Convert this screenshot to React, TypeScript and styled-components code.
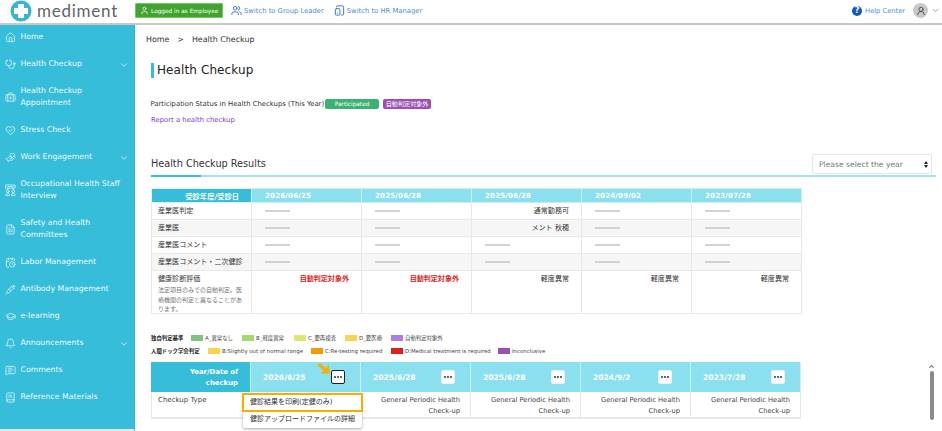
import React from 'react';
import styled, { createGlobalStyle } from 'styled-components';
import { Home, Stethoscope, BriefcaseMedical, HandHeart, FileText, CalendarClock, Syringe, GraduationCap, Bell, MessageSquareText, BookText, ChevronDown, User, UserRound, Users, TabletSmartphone, ChevronUp } from 'lucide-react';

const FONT = '"DejaVu Sans", "Noto Sans CJK JP", sans-serif';

const Global = createGlobalStyle`
  html, body { margin: 0; padding: 0; height: 431px; overflow: hidden; background: #fff; }
  #root { height: 431px; }
  * { box-sizing: border-box; }
  body { font-family: ${FONT}; }
`;

const Page = styled.div`
  width: 942px; height: 431px; display: flex; flex-direction: column; overflow: hidden; position: relative;
`;
const Header = styled.header`
  height: 25px; flex: none; display: flex; align-items: center; border-bottom: 2px solid #c8c8c8; padding-bottom: 2px;
`;
const Logo = styled.div`
  width: 135px; display: flex; align-items: center; gap: 5px; padding-left: 10px; flex: none;
`;
const LogoText = styled.span`
  font-family: "Lato", sans-serif; font-size: 17px; letter-spacing: 0.75px; color: #5f6468; line-height: 20px;
`;
const LoggedIn = styled.div`
  width: 88px; height: 15px; background: #3fa42c; border: 1px solid #77c766; border-radius: 1px; color: #fff; display: flex; align-items: center; gap: 2px; padding-left: 4px; font-size: 5.8px; white-space: nowrap;
`;
const SwitchLink = styled.a<{ $ml: number }>`
  margin-left: ${p => p.$ml}px; display: flex; align-items: center; gap: 2px; color: #4a8bdc; font-size: 6.8px; white-space: nowrap;
`;
const Right = styled.div`
  margin-left: auto; display: flex; align-items: center; padding-right: 2px;
`;
const HelpLink = styled.a`
  display: flex; align-items: center; gap: 3px; color: #4a8bdc; font-size: 6.7px; white-space: nowrap; margin-right: 8px;
`;
const HelpDot = styled.span`
  width: 10px; height: 10px; border-radius: 50%; background: #1259c3; color: #fff; font-size: 8px; font-weight: 700; line-height: 10px; text-align: center;
`;
const Avatar = styled.span`
  width: 15px; height: 15px; border-radius: 50%; background: #c9c9c9; display: flex; align-items: center; justify-content: center; color: #444; margin-right: 3px;
`;
const Body = styled.div`
  flex: 1; display: flex; min-height: 0;
`;
const Sidebar = styled.nav`
  width: 135px; flex: none; background: #36bdd9; border-bottom: 2px solid #e4e4e4; border-right: 1px solid #2fb2ce;
`;
const NavItem = styled.div`
  display: flex; align-items: center; padding: 6px 0 9px 5px; color: #eefafc; font-size: 7.75px; line-height: 12px; position: relative;
`;
const NavIcon = styled.span`
  width: 15.5px; flex: none; display: flex; justify-content: flex-start; color: #c6eff6;
`;
const NavChevron = styled.span`
  position: absolute; right: 5px; top: 8px; color: #d6f3f8; display: flex;
`;
const Main = styled.main`
  flex: 1; padding: 9px 6px 0 11px; min-width: 0; overflow: hidden; color: #333;
`;
const Crumb = styled.div`
  font-size: 7.9px; line-height: 12px; color: #333; display: flex; gap: 8px; margin-bottom: 17px;
`;
const Section = styled.div`
  padding-left: 5px;
`;
const Title = styled.h1`
  margin: 0 0 21px; height: 15px; border-left: 3px solid #36bdd9; padding-left: 3px; font-size: 12px; line-height: 15px; font-weight: 400; color: #222; letter-spacing: 0.1px;
`;
const StatusLine = styled.div`
  display: flex; align-items: center; font-size: 6.87px; line-height: 10px; color: #333; height: 10px; margin-left: -0.5px;
`;
const Badge = styled.span<{ $bg: string; $w: number; $ml: number; $fs: number }>`
  width: ${p => p.$w}px; margin-left: ${p => p.$ml}px; height: 10px; background: ${p => p.$bg}; color: #fff; border-radius: 2px; font-size: ${p => p.$fs}px; line-height: 10px; text-align: center; white-space: nowrap; flex: none;
`;
const ReportLink = styled.a`
  display: block; margin-top: 6px; font-size: 6.87px; line-height: 10px; color: #8438d6;
`;
const ResultsHead = styled.div`
  margin-top: 29px; height: 23px; display: flex; justify-content: space-between; align-items: flex-start; padding-right: 4px; border-bottom: 2px solid #a3e5ef; position: relative;
  &::after { content: ''; position: absolute; left: 0; bottom: -2px; width: 50px; height: 2px; background: #36bdd9; }
`;
const ResultsTitle = styled.h2`
  margin: 3px 0 0; font-size: 9.7px; line-height: 14px; font-weight: 400; color: #333;
`;
const YearSelect = styled.div`
  width: 120px; height: 20px; border: 1px solid #e6e6e6; border-radius: 2px; background: #fff; display: flex; align-items: center; justify-content: space-between; padding: 0 3px 0 6px; font-size: 7.6px; color: #777;
`;
const Arrows = styled.span`
  display: flex; flex-direction: column; gap: 1px;
  &::before { content: ''; border: 2px solid transparent; border-top: 0; border-bottom: 3px solid #222; }
  &::after { content: ''; border: 2px solid transparent; border-bottom: 0; border-top: 3px solid #222; }
`;
const Table = styled.table`
  margin-top: 11px; width: 650px; table-layout: fixed; border-collapse: collapse; font-size: 7.05px; color: #333;
  col:first-child { width: 100px; }
  col { width: 110px; }
`;
const HeadLabel = styled.th`
  height: 14px; background: #36bdd9; color: #fff; font-size: 7.3px; font-weight: 700; text-align: right; padding: 0 12px 0 0; border: 1px solid #d9f3f7; white-space: nowrap;
`;
const HeadDate = styled.th`
  background: #8ae0ee; color: #fff; font-size: 7.1px; font-weight: 700; text-align: left; padding: 0 0 0 13px; border: 1px solid #c8f0f6; letter-spacing: 0.15px;
`;
const Row = styled.tr<{ $shade?: boolean }>`
  background: ${p => (p.$shade ? '#f6f6f6' : '#fff')};
`;
const LabelCell = styled.td`
  height: 17px; padding: 0 0 0 6px; border: 1.5px solid #e8e8e8; vertical-align: middle; line-height: 12px; color: #333;
`;
const TallLabel = styled(LabelCell)`
  height: 43px; vertical-align: top; padding-top: 2px;
`;
const Note = styled.div`
  font-size: 6px; line-height: 9.5px; color: #777; padding-right: 5px; margin-bottom: -2px;
`;
const ValueCell = styled.td<{ $red?: boolean; $top?: boolean }>`
  padding: ${p => (p.$top ? '2px' : '0')} 12px 0 13px; border: 1.5px solid #e8e8e8; text-align: right; vertical-align: ${p => (p.$top ? 'top' : 'middle')}; line-height: 12px; color: ${p => (p.$red ? '#e0201c' : '#333')}; font-weight: ${p => (p.$red ? 700 : 400)};
`;
const Dash = styled.div`
  width: 25px; height: 1.5px; background: #d2d2d2;
`;
const Legend = styled.div`
  margin-top: 17px;
`;
const LegendRow = styled.div`
  height: 13px; display: flex; align-items: center; font-size: 5.4px; color: #444; white-space: nowrap;
`;
const LegendTitle = styled.b<{ $w: number }>`
  width: ${p => p.$w}px; color: #222; font-weight: 700; flex: none;
`;
const LegendItem = styled.span<{ $w: number }>`
  width: ${p => p.$w}px; flex: none; display: flex; align-items: center; gap: 2px;
`;
const Swatch = styled.i<{ $c: string }>`
  width: 12px; height: 6px; background: ${p => p.$c}; flex: none;
`;
const Table2 = styled.div`
  margin-top: 5px; width: 650px; display: grid; grid-template-columns: 100px repeat(5, 110px); position: relative; font-size: 7px; color: #444;
`;
const H2Label = styled.div`
  height: 30px; background: #36bdd9; color: #fff; font-weight: 700; font-size: 6.9px; line-height: 10.5px; text-align: right; padding: 5px 12px 0 30px; border-right: 1px solid #c8f0f6;
`;
const H2Date = styled.div<{ $pr: number }>`
  background: #8ae0ee; color: #fff; font-weight: 700; font-size: 7.6px; display: flex; align-items: center; justify-content: space-between; padding: 0 ${p => p.$pr}px 0 12px; border-right: 1px solid #c8f0f6;
`;
const DotsButton = styled.button<{ $active?: boolean }>`
  width: 14px; height: 14px; padding: 0; border-radius: 2px; background: #fff; border: ${p => (p.$active ? '1px solid #222' : '1px solid #f0f0f0')}; display: flex; align-items: center; justify-content: center;
`;
const BodyCell = styled.div<{ $first?: boolean }>`
  height: 27px; border: solid #e8e8e8; border-width: 0 1px 2px ${p => (p.$first ? 1 : 0)}px; padding: 3px 10px 0 ${p => (p.$first ? 6 : 9)}px; line-height: 10.5px; text-align: ${p => (p.$first ? 'left' : 'right')}; font-size: ${p => (p.$first ? 7 : 6.7)}px;
`;
const Pointer = styled.svg`
  position: absolute; left: 166px; top: 1px;
`;
const Menu = styled.div`
  position: absolute; left: 92px; top: 31px; width: 119px; height: 35px; background: #fff; border-radius: 2px; box-shadow: 0 1px 3px rgba(0,0,0,.35); font-size: 7px; color: #333; z-index: 2;
`;
const MenuItem = styled.div<{ $on?: boolean }>`
  height: ${p => (p.$on ? 19 : 15)}px; line-height: ${p => (p.$on ? 15 : 14)}px; padding-left: ${p => (p.$on ? 6 : 7)}px; white-space: nowrap; margin: 0 ${p => (p.$on ? -1 : 0)}px 0 ${p => (p.$on ? -1 : 0)}px; border: ${p => (p.$on ? '2px solid #f7ae00' : '0')};
`;
const ScrollBar = styled.div`
  position: absolute; right: 6px; top: 363px; width: 9px; height: 68px; display: flex; flex-direction: column; align-items: center; color: #777;
`;
const ScrollThumb = styled.div`
  width: 4px; height: 49px; background: #8a8a8a; border-radius: 2px; margin-top: 1px;
`;

const Dots = () => (
  <svg width="8" height="2" viewBox="0 0 8 2" fill="#222">
    <circle cx="1" cy="1" r="0.9" /><circle cx="4" cy="1" r="0.9" /><circle cx="7" cy="1" r="0.9" />
  </svg>
);
const HeartCheck = () => (
  <svg width="11" height="11" viewBox="0 0 24 24" fill="none" stroke="currentColor" strokeWidth="2" strokeLinecap="round" strokeLinejoin="round">
    <path d="M12 21 3.5 12.5a5.5 5.5 0 0 1 8-7.5l.5.6.5-.6a5.5 5.5 0 0 1 8 7.5Z" />
    <path d="m8 11 3 3 5-5" />
  </svg>
);
const Interview = () => (
  <svg width="11" height="12" viewBox="0 0 24 26" fill="none" stroke="currentColor" strokeWidth="2" strokeLinecap="round" strokeLinejoin="round">
    <rect x="2" y="2" width="20" height="7" />
    <path d="M6 5.5h12" />
    <path d="M7 9l-2 4M17 9l2 4" />
    <circle cx="6" cy="16" r="3" /><circle cx="18" cy="16" r="3" />
    <path d="M2 24c0-3 2-4 4-4s4 1 4 4zM14 24c0-3 2-4 4-4s4 1 4 4z" />
  </svg>
);
const nav: { t: React.ReactNode; i: React.ReactNode; c?: boolean }[] = [
  { t: 'Home', i: <Home size={11} /> },
  { t: 'Health Checkup', i: <Stethoscope size={11} />, c: true },
  { t: <>Health Checkup<br />Appointment</>, i: <BriefcaseMedical size={11} /> },
  { t: 'Stress Check', i: <HeartCheck /> },
  { t: 'Work Engagement', i: <HandHeart size={11} />, c: true },
  { t: <>Occupational Health Staff<br />Interview</>, i: <Interview /> },
  { t: <>Safety and Health<br />Committees</>, i: <FileText size={11} /> },
  { t: 'Labor Management', i: <CalendarClock size={11} /> },
  { t: 'Antibody Management', i: <Syringe size={11} /> },
  { t: 'e-learning', i: <GraduationCap size={11} /> },
  { t: 'Announcements', i: <Bell size={11} />, c: true },
  { t: 'Comments', i: <MessageSquareText size={11} /> },
  { t: 'Reference Materials', i: <BookText size={11} /> },
];

const dates = ['2026/06/25', '2025/06/28', '2025/06/28', '2024/09/02', '2023/07/28'];
const rows: { l: string; v: (string | null)[]; s?: boolean }[] = [
  { l: '産業医判定', v: [null, null, '通常勤務可', null, null] },
  { l: '産業医', v: [null, null, 'メント 秋穂', null, null], s: true },
  { l: '産業医コメント', v: [null, null, null, null, null] },
  { l: '産業医コメント・二次健診', v: [null, null, null, null, null], s: true },
];
const eval_ = ['自動判定対象外', '自動判定対象外', '軽度異常', '軽度異常', '軽度異常'];
const dates2 = [
  { d: '2026/6/25', pr: 15, t: '' }, { d: '2025/6/28', pr: 15, t: 'General Periodic Health Check-up' }, { d: '2025/6/28', pr: 15, t: 'General Periodic Health Check-up' },
  { d: '2024/9/2', pr: 18, t: 'General Periodic Health Check-up' }, { d: '2023/7/28', pr: 15, t: 'General Periodic Health Check-up' },
];
const legendA = [
  { c: '#7cc47f', t: 'A_異常なし', w: 51 }, { c: '#a4d96c', t: 'B_軽度異常', w: 52 }, { c: '#dde66f', t: 'C_要再検査', w: 51 },
  { c: '#fdd24e', t: 'D_要医療', w: 46 }, { c: '#b07be8', t: '自動判定対象外', w: 60 },
];
const legendB = [
  { c: '#fdd24e', t: 'B:Slightly out of normal range', w: 103 }, { c: '#f59b00', t: 'C:Re-testing required', w: 80 },
  { c: '#e01e1e', t: 'D:Medical treatment is required', w: 107 }, { c: '#9b4fb5', t: 'Inconclusive', w: 60 },
];

export default function App() {
  return (
    <Page>
      <Global />
      <Header>
        <Logo>
          <svg width="22" height="22" viewBox="0 0 22 22">
            <circle cx="11" cy="11" r="10.5" fill="#36b4d2" />
            <path d="M8.5 4.5h5v4h4v5h-4v4h-5v-4h-4v-5h4z" fill="#fff" stroke="#fff" strokeLinejoin="round" />
          </svg>
          <LogoText>mediment</LogoText>
        </Logo>
        <LoggedIn><User size={9} />Logged in as Employee</LoggedIn>
        <SwitchLink $ml={8}><Users size={11} color="#2e6fd0" />Switch to Group Leader</SwitchLink>
        <SwitchLink $ml={10}><TabletSmartphone size={11} color="#2e6fd0" />Switch to HR Manager</SwitchLink>
        <Right>
          <HelpLink><HelpDot>?</HelpDot>Help Center</HelpLink>
          <Avatar><UserRound size={10} /></Avatar>
          <ChevronDown size={9} color="#888" />
        </Right>
      </Header>
      <Body>
        <Sidebar>
          {nav.map((n, i) => (
            <NavItem key={i}>
              <NavIcon>{n.i}</NavIcon>
              <span>{n.t}</span>
              {n.c && <NavChevron><ChevronDown size={10} /></NavChevron>}
            </NavItem>
          ))}
        </Sidebar>
        <Main>
          <Crumb><span>Home</span><span>&gt;</span><span>Health Checkup</span></Crumb>
          <Section>
            <Title>Health Checkup</Title>
            <StatusLine>
              Participation Status in Health Checkups (This Year)
              <Badge $bg="#3bb273" $w={54} $ml={1} $fs={5.8}>Participated</Badge>
              <Badge $bg="#9b4fb5" $w={48} $ml={4} $fs={6.1}>自動判定対象外</Badge>
            </StatusLine>
            <ReportLink>Report a health checkup</ReportLink>
            <ResultsHead>
              <ResultsTitle>Health Checkup Results</ResultsTitle>
              <YearSelect>Please select the year<Arrows /></YearSelect>
            </ResultsHead>
            <Table>
              <colgroup><col /><col /><col /><col /><col /><col /></colgroup>
              <thead>
                <tr>
                  <HeadLabel>受診年度/受診日</HeadLabel>
                  {dates.map((d, i) => <HeadDate key={i}>{d}</HeadDate>)}
                </tr>
              </thead>
              <tbody>
                {rows.map((r, i) => (
                  <Row key={i} $shade={r.s}>
                    <LabelCell>{r.l}</LabelCell>
                    {r.v.map((v, j) => <ValueCell key={j}>{v ?? <Dash />}</ValueCell>)}
                  </Row>
                ))}
                <Row>
                  <TallLabel>健康診断評価<Note>法定項目のみでの自動判定。医療機関の判定と異なることがあります。</Note></TallLabel>
                  {eval_.map((v, j) => <ValueCell key={j} $top $red={j < 2}>{v}</ValueCell>)}
                </Row>
              </tbody>
            </Table>
            <Legend>
              <LegendRow>
                <LegendTitle $w={40}>独自判定基準</LegendTitle>
                {legendA.map(l => <LegendItem key={l.t} $w={l.w}><Swatch $c={l.c} />{l.t}</LegendItem>)}
              </LegendRow>
              <LegendRow>
                <LegendTitle $w={57}>人間ドック学会判定</LegendTitle>
                {legendB.map(l => <LegendItem key={l.t} $w={l.w}><Swatch $c={l.c} />{l.t}</LegendItem>)}
              </LegendRow>
            </Legend>
            <Table2>
              <H2Label>Year/Date of checkup</H2Label>
              {dates2.map((d, i) => (
                <H2Date key={i} $pr={d.pr}>{d.d}<DotsButton $active={i === 0}><Dots /></DotsButton></H2Date>
              ))}
              <BodyCell $first>Checkup Type</BodyCell>
              {dates2.map((d, i) => <BodyCell key={i}>{d.t}</BodyCell>)}
              <Pointer width="13" height="11" viewBox="0 0 13 11">
                <path d="M12.5 10.5H4L6.4 7.2 0.5 2.5 3 0 8.6 5 12 1.5Z" fill="#f7ae00" />
              </Pointer>
              <Menu>
                <MenuItem $on>健診結果を印刷(定健のみ)</MenuItem>
                <MenuItem>健診アップロードファイルの詳細</MenuItem>
              </Menu>
            </Table2>
          </Section>
        </Main>
      </Body>
      <ScrollBar>
        <ChevronUp size={7} strokeWidth={4} />
        <ScrollThumb />
      </ScrollBar>
    </Page>
  );
}
